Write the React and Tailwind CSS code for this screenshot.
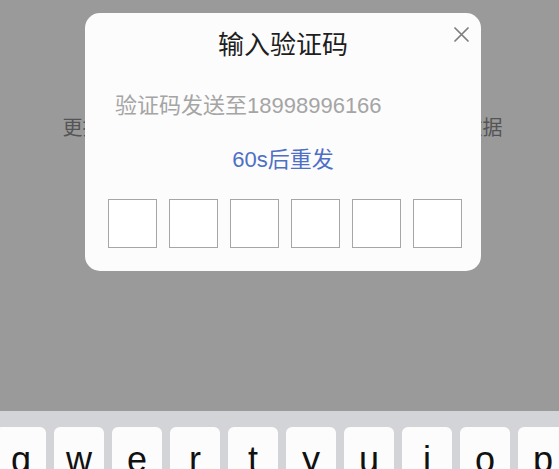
import React from "react";

const keys = ["q", "w", "e", "r", "t", "y", "u", "i", "o", "p"];

const CodeModal = () => {
  return (
    <div className="absolute left-[85px] top-[13px] w-[396px] h-[258px] rounded-[15px] bg-[#fcfcfc]">
      {/* close button */}
      <button className="absolute left-[368px] top-[13px] w-[16px] h-[16px] flex items-center justify-center">
        <svg width="15" height="15" viewBox="0 0 15 15" fill="none">
          <path d="M1 1L14 14M14 1L1 14" stroke="#7d7d7d" strokeWidth="1.7" strokeLinecap="round" />
        </svg>
      </button>

      <div className="flex flex-col pt-[14px]">
        <h2 className="text-center text-[26px] leading-[36px] font-normal text-[#1e1e1e]">输入验证码</h2>
        <p className="mt-[29px] pl-[30px] text-[22px] leading-[28px] text-[#a5a5a5]">
          验证码发送至18998996166
        </p>
        <p className="mt-[26px] text-center text-[22px] leading-[28px] text-[#4e6fc6]">60s后重发</p>

        {/* code inputs */}
        <div className="mt-[25px] pl-[23px] flex gap-[12px]">
          {[0, 1, 2, 3, 4, 5].map((i) => (
            <div key={i} className="w-[49px] h-[49px] border border-[#a6a6a6] bg-white" />
          ))}
        </div>
      </div>
    </div>
  );
};

const App = () => {
  return (
    <div
      className="w-[559px] h-[469px] overflow-hidden bg-[#9a9a9b] flex flex-col"
      style={{ fontFamily: '"Liberation Sans", "Noto Sans CJK SC", sans-serif' }}
    >
      {/* page behind the dialog */}
      <div className="relative h-[411px] shrink-0">
        <p className="pt-[115px] pl-[6px] text-center text-[20px] leading-[26px] text-[#545454]">
          更换手机号后，可以使用新手机号登录并同步数据
        </p>
        <CodeModal />
      </div>

      {/* keyboard */}
      <div className="flex-1 bg-[#d2d4d8] pt-[16px]">
        <div className="flex gap-[8px] ml-[-4px]">
          {keys.map((k) => (
            <div
              key={k}
              className="w-[50px] h-[60px] shrink-0 rounded-[6px] bg-[#fcfcfc] pt-[15px] text-center text-[36px] leading-none text-[#111]"
            >
              {k}
            </div>
          ))}
        </div>
      </div>
    </div>
  );
};

export default App;
